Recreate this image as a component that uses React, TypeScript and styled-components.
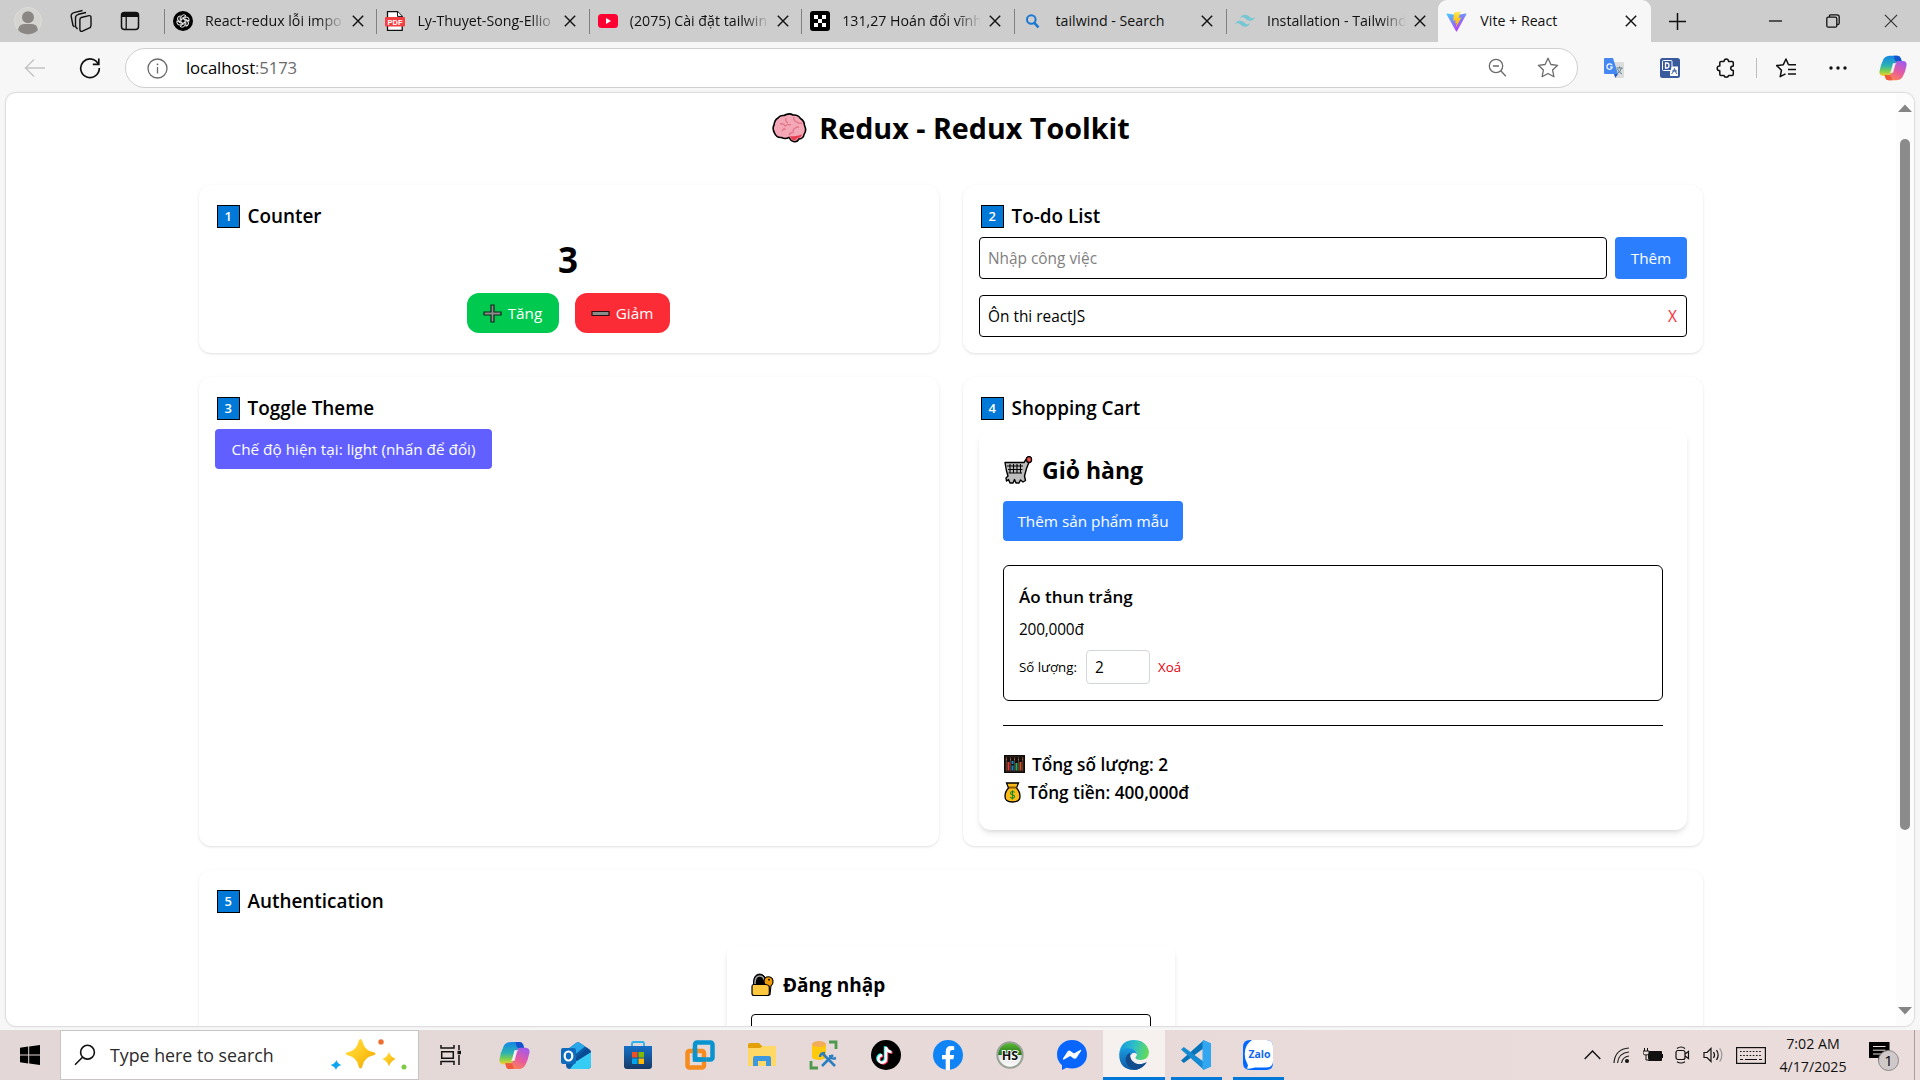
import React from "react";
import styled, { createGlobalStyle } from "styled-components";

const GlobalStyle = createGlobalStyle`
  *, *::before, *::after { box-sizing: border-box; }
  html, body { margin: 0; padding: 0; overflow: hidden; }
  body { font-family: "Segoe UI", "Open Sans", "Noto Sans", sans-serif; color: #000; }
  svg { display: block; flex: none; }
  h1, h2, h3, p { margin: 0; }
  button, input { font: inherit; border: 0; }
`;

/* ---------- shell ---------- */

const Screen = styled.div`
  width: 1920px;
  height: 1080px;
  display: flex;
  flex-direction: column;
  overflow: hidden;
  background: #f7f7f7;
`;

const TabStrip = styled.header`
  height: 42px;
  flex: none;
  display: flex;
  background: #cdcdcd;
`;

const StripTools = styled.div`
  width: 164px;
  flex: none;
  display: flex;
  align-items: center;
  justify-content: space-between;
  padding: 0 24px 0 14px;
`;

const Tab = styled.div<{ $active?: boolean }>`
  width: 212.4px;
  flex: none;
  display: flex;
  align-items: center;
  position: relative;
  padding: 0 12px 0 ${(p) => (p.$active ? 8 : 9)}px;
  background: ${(p) => (p.$active ? "#f7f7f7" : "transparent")};
  border-radius: ${(p) => (p.$active ? "9px 9px 0 0" : "0")};

  &::before {
    content: "";
    position: absolute;
    left: 0;
    top: 9px;
    width: 1px;
    height: 25px;
    background: ${(p) => (p.$active ? "transparent" : "#808080")};
  }
`;

const TabLabel = styled.span<{ $fade?: boolean }>`
  width: 138px;
  flex: none;
  margin-left: ${(p) => (p.$fade ? 12 : 13)}px;
  margin-right: ${(p) => (p.$fade ? 9 : 7)}px;
  overflow: hidden;
  white-space: nowrap;
  font-size: 14.2px;
  line-height: 22px;
  color: #111;
  mask-image: ${(p) => (p.$fade ? "linear-gradient(90deg, #000 82%, transparent 101%)" : "none")};
`;

const WindowControls = styled.div`
  flex: 1;
  display: flex;
  align-items: center;
  justify-content: space-between;
  padding: 0 22px 0 18px;
`;

const Captions = styled.div`
  display: flex;
  gap: 44px;
`;

const Toolbar = styled.div`
  height: 50px;
  flex: none;
  display: flex;
  align-items: flex-start;
  padding-top: 6px;
`;

const NavButtons = styled.div`
  width: 125px;
  height: 40px;
  display: flex;
  align-items: center;
  gap: 33px;
  padding-left: 24px;
`;

const AddressBar = styled.div`
  width: 1453px;
  height: 40px;
  display: flex;
  align-items: center;
  padding: 0 18px 0 21px;
  border: 1px solid #cfcfcf;
  border-radius: 20px;
  background: #fff;
`;

const Url = styled.span`
  flex: 1;
  margin: -2px 0 0 18px;
  font-size: 16.7px;
  letter-spacing: -0.1px;
  span { color: #6b6b6b; }
`;

const AddressActions = styled.div`
  display: flex;
  align-items: center;
  gap: 29px;
`;

const Extensions = styled.div`
  flex: 1;
  height: 40px;
  display: flex;
  align-items: center;
  padding: 0 13px 0 26px;
`;

const ExtensionTools = styled.div`
  display: flex;
  gap: 36px;
`;

const Divider = styled.span`
  width: 1px;
  height: 20px;
  margin: 0 18px 0 20px;
  background: #bdbdbd;
`;

const EdgeTools = styled.div`
  flex: 1;
  display: flex;
  align-items: center;
  justify-content: space-between;
`;

/* ---------- page ---------- */

const Viewport = styled.div`
  height: 935px;
  flex: none;
  margin: 0 5px 3px;
  display: flex;
  overflow: hidden;
  border: 1px solid #dedede;
  border-radius: 11px;
  background: #fff;
  box-shadow: 0 0 2px rgba(0, 0, 0, 0.08);
`;

const Main = styled.main`
  width: 1890px;
  height: 933px;
  overflow: hidden;
  display: flex;
  flex-direction: column;
  align-items: center;
  padding-top: 17px;
`;

const ScrollTrack = styled.div`
  width: 18px;
  display: flex;
  flex-direction: column;
  align-items: center;
  padding-top: 11px;
  background: #fcfcfc;
`;

const ScrollThumb = styled.div`
  width: 10px;
  height: 691px;
  margin: 27px 0 177px;
  border-radius: 5px;
  background: #8b8b8b;
`;

const PageTitle = styled.h1`
  height: 36px;
  display: flex;
  align-items: center;
  gap: 12px;
  font-size: 28.7px;
  line-height: 36px;
  font-weight: 700;
  white-space: nowrap;
`;

const Grid = styled.div`
  width: 1504px;
  margin-top: 39px;
  display: grid;
  grid-template-columns: 1fr 1fr;
  grid-template-rows: 168px 469px 260px;
  gap: 24px;
`;

const Card = styled.section<{ $wide?: boolean }>`
  grid-column: ${(p) => (p.$wide ? "1 / -1" : "auto")};
  padding: 16px;
  border-radius: 12px;
  background: #fff;
  box-shadow: 0 1px 3px rgba(0, 0, 0, 0.1), 0 1px 2px -1px rgba(0, 0, 0, 0.1);
`;

const CardTitle = styled.h2`
  height: 28px;
  margin-bottom: 8px;
  display: flex;
  align-items: center;
  gap: 8px;
  padding: 2px 0 0 2px;
  font-size: 18.9px;
  line-height: 26px;
  font-weight: 600;
`;

const Keycap = styled.span`
  width: 22.5px;
  height: 23px;
  display: flex;
  align-items: center;
  justify-content: center;
  border: 1.5px solid #000;
  background: #0078d7;
  color: #fff;
  font-size: 13px;
  line-height: 20px;
  font-weight: 600;
`;

const Count = styled.p`
  padding-top: 3px;
  text-align: center;
  font-size: 35px;
  line-height: 40px;
  height: 40px;
  font-weight: 700;
  margin: 0 2px 16px 0;
`;

const ButtonRow = styled.div`
  display: flex;
  justify-content: center;
  gap: 16px;
  margin-right: 2px;
`;

const Button = styled.button<{ $tone: string; $width: number; $height?: number; $round?: boolean }>`
  width: ${(p) => p.$width}px;
  height: ${(p) => p.$height ?? 40}px;
  flex: none;
  display: flex;
  align-items: center;
  justify-content: center;
  gap: 6px;
  padding: 0;
  border-radius: ${(p) => (p.$round ? 12 : 4)}px;
  background: ${(p) => p.$tone};
  color: #fff;
  font-size: 15.3px;
  white-space: nowrap;
`;

const TodoForm = styled.div`
  display: flex;
  gap: 8px;
  margin-bottom: 16px;
`;

const TextInput = styled.input`
  flex: 1;
  height: 42px;
  padding: 0 8px;
  border: 1px solid #000;
  border-radius: 4px;
  background: #fff;
  font-size: 15.4px;
  &::placeholder { color: #808080; opacity: 1; }
`;

const TodoItem = styled.div`
  height: 42px;
  display: flex;
  align-items: center;
  justify-content: space-between;
  padding: 0 9px 0 8px;
  border: 1px solid #000;
  border-radius: 4px;
  font-size: 15.4px;
  span { color: #fb2c36; }
`;

const CartPanel = styled.div`
  padding: 24px;
  border-radius: 12px;
  background: #fff;
  box-shadow: 0 4px 6px -1px rgba(0, 0, 0, 0.1), 0 2px 4px -2px rgba(0, 0, 0, 0.1);
`;

const PanelTitle = styled.h2<{ $size: number; $line: number; $gap: number }>`
  height: ${(p) => p.$line}px;
  margin-bottom: 16px;
  padding-top: 2px;
  display: flex;
  align-items: center;
  gap: ${(p) => p.$gap}px;
  font-size: ${(p) => p.$size}px;
  line-height: ${(p) => p.$line - 2}px;
  font-weight: 700;
`;

const CartItem = styled.div`
  height: 136px;
  margin: 24px 0;
  padding: 16px 15px;
  border: 1px solid #000;
  border-radius: 6px;
`;

const ItemName = styled.h3`
  height: 28px;
  padding-top: 1px;
  font-size: 17px;
  line-height: 28px;
  font-weight: 600;
`;

const ItemPrice = styled.p`
  margin: 8px 0;
  font-size: 15.4px;
  line-height: 24px;
  letter-spacing: -0.2px;
`;

const QuantityRow = styled.div`
  display: flex;
  align-items: center;
  gap: 8px;
  font-size: 13.3px;
`;

const QuantityLabel = styled.span`
  width: 59px;
  white-space: nowrap;
`;

const QuantityInput = styled.input`
  width: 64px;
  height: 34px;
  padding: 0 8px;
  border: 1px solid #d1d5dc;
  border-radius: 4px;
  font-size: 15.4px;
`;

const RemoveLink = styled.span`
  color: #e7000b;
`;

const Totals = styled.div`
  padding-top: 24px;
  border-top: 1px solid #000;
`;

const TotalLine = styled.p`
  height: 28px;
  display: flex;
  align-items: center;
  gap: 7px;
  padding-left: 1px;
  font-size: 17.2px;
  font-weight: 600;
`;

const LoginPanel = styled(CartPanel)`
  width: 448px;
  height: 300px;
  margin: 32px auto 0;
  border-radius: 8px;
`;

const LoginInput = styled(TextInput)`
  width: 400px;
`;

/* ---------- taskbar ---------- */

const Taskbar = styled.footer`
  height: 50px;
  flex: none;
  display: flex;
  background: linear-gradient(90deg, #e3d7d7, #e6d9d8 45%, #ebdddc);
`;

const StartSlot = styled.div`
  width: 60px;
  display: flex;
  align-items: center;
  justify-content: center;
`;

const SearchBox = styled.div`
  width: 359px;
  height: 50px;
  display: flex;
  align-items: center;
  padding: 0 11px 0 13px;
  border: 1px solid #c9c4c4;
  background: #fff;
`;

const SearchText = styled.span`
  flex: 1;
  margin-left: 14px;
  font-size: 17.8px;
  color: #2b2b2b;
`;

const TaskViewSlot = styled(StartSlot)`
  width: 63px;
`;

const AppSlot = styled.div<{ $open?: boolean; $current?: boolean }>`
  width: 62px;
  display: flex;
  align-items: center;
  justify-content: center;
  position: relative;
  background: ${(p) => (p.$current ? "#f6f0ef" : "transparent")};

  &::after {
    content: "";
    position: absolute;
    bottom: 0;
    left: ${(p) => (p.$current ? 0 : 6)}px;
    right: ${(p) => (p.$current ? 0 : 5)}px;
    height: 3px;
    background: ${(p) => (p.$open || p.$current ? "#0078d7" : "transparent")};
  }
`;

const AppRow = styled.div`
  display: flex;
  padding-left: 1px;
`;

const Tray = styled.div`
  margin-left: auto;
  display: flex;
  align-items: center;
`;

const TrayIcons = styled.div`
  display: flex;
  align-items: center;
  gap: 12px;
  margin-right: 12px;
`;

const Clock = styled.div`
  width: 70px;
  font-size: 14.2px;
  line-height: 23px;
  color: #111;
  white-space: nowrap;
  display: flex;
  flex-direction: column;
  align-items: center;
  padding-bottom: 1px;
`;

const Notice = styled.div`
  position: relative;
  width: 30px;
  height: 32px;
  margin: 5px 15px 0 21px;
`;

const NoticeBadge = styled.span`
  position: absolute;
  left: 9px;
  top: 8px;
  width: 21px;
  height: 21px;
  border-radius: 50%;
  border: 1px solid #8b8786;
  background: #cfcac9;
  font-size: 15px;
  line-height: 19px;
  text-align: center;
`;

const ShowDesktop = styled.span`
  width: 6px;
  height: 50px;
  border-left: 1px solid #a99f9e;
`;

/* ---------- drawings ---------- */

const CloseX = ({ size = 12, color = "#111", w = 1.4 }: { size?: number; color?: string; w?: number }) => (
  <svg width={size} height={size} viewBox="0 0 12 12" stroke={color} strokeWidth={w}>
    <path d="M.8 .8 11.2 11.2M11.2 .8.8 11.2" />
  </svg>
);

const Avatar = () => (
  <svg width="28" height="28" viewBox="0 0 28 28">
    <circle cx="14" cy="14" r="13.5" fill="#d6d4d1" stroke="#dedcd9" />
    <circle cx="14" cy="10.3" r="6" fill="#8b8784" />
    <path d="M4 23q1-6 6-6h8q5 0 6 6a13.5 13.5 0 0 1-20 0z" fill="#8b8784" />
  </svg>
);

const Workspaces = () => (
  <svg width="24" height="24" viewBox="0 0 24 24" fill="#cdcdcd" stroke="#111" strokeWidth="1.4" strokeLinejoin="round">
    <path d="M13.500 1.500 5 3.600Q1.800 4.500 2.200 7.500L4 16.500l1.500 1.500" fill="none" />
    <path d="M17 3.500 9.500 5.300Q6.300 6.200 6.500 9v8.500l2 2.500" fill="none" />
    <path d="m12.300 8.500 7.700-1.900q2-.2 2 1.800v8.200q0 2-2 2.600l-6.500 3q-2.400.6-2.600-1.600V10.800q0-1.900 1.400-2.300z" />
  </svg>
);

const VerticalTabs = () => (
  <svg width="20" height="20" viewBox="0 0 20 20">
    <rect x="1.500" y="1.500" width="17" height="17" rx="3" fill="none" stroke="#111" strokeWidth="1.500" />
    <path d="M1 4.500Q1 1 4.500 1h11Q19 1 19 4.500V6H1z" fill="#111" />
    <path d="M6.200 6v12" stroke="#111" strokeWidth="1.300" />
  </svg>
);

const ChatGpt = () => (
  <svg width="20" height="20" viewBox="0 0 20 20">
    <circle cx="10" cy="10" r="10" fill="#000" />
    <g fill="none" stroke="#fff" strokeWidth=".9">
      {[0, 60, 120, 180, 240, 300].map((a) => (
        <path key={a} transform={`rotate(${a} 10 10)`} d="M8 11.200V6.200q.3-2.400 2.700-2.400 1.500 0 2.300 1.100L8.800 7.400" />
      ))}
    </g>
  </svg>
);

const PdfIcon = () => (
  <svg width="20" height="20" viewBox="0 0 20 20">
    <path d="M2.500 .7h10l4.700 4.700v13.900h-14.700z" fill="#fff" stroke="#111" strokeWidth="1.300" />
    <path d="M12.500 .7v4.700h4.700" fill="#fff" stroke="#111" />
    <rect y="6" width="20" height="9.500" rx="1" fill="#f43e42" />
    <text x="10" y="13.500" fontSize="7.500" fontWeight="700" fill="#fff" textAnchor="middle" fontFamily="Liberation Sans, sans-serif">PDF</text>
  </svg>
);

const YouTube = () => (
  <svg width="20" height="20" viewBox="0 0 20 20">
    <rect y="3" width="20" height="14" rx="3.500" fill="#ff0033" />
    <path d="M8 7v6l5-3z" fill="#fff" />
  </svg>
);

const Okx = () => (
  <svg width="20" height="20" viewBox="0 0 20 20">
    <rect width="20" height="20" rx="3" fill="#000" />
    <path d="M4 4h4v4H4zM12 4h4v4h-4zM8 8h4v4H8zM4 12h4v4H4zM12 12h4v4h-4z" fill="#fff" />
  </svg>
);

const BingSearch = () => (
  <svg width="20" height="20" viewBox="0 0 20 20" fill="none" stroke="#1a77d4" strokeWidth="2">
    <circle cx="8.300" cy="8.500" r="4.300" />
    <path d="m11.300 11.800 4.200 4.600" strokeWidth="2.500" />
  </svg>
);

const Tailwind = () => (
  <svg width="20" height="20" viewBox="0 0 54 54" fill="#75c7d3">
    <path d="M27 10q-10.800 0-13.500 10.800 4-5.400 9.500-4c2.100.5 3.500 2 5.200 3.700C30.900 23.200 34 26.200 40.500 26.200q10.800 0 13.500-10.800-4 5.400-9.500 4c-2.100-.5-3.500-2-5.200-3.700C36.600 13 33.500 10 27 10zM13.500 26.200Q2.700 26.200 0 37q4-5.400 9.500-4c2.100.5 3.500 2 5.200 3.700 2.700 2.700 5.800 5.700 12.300 5.700q10.800 0 13.500-10.800-4 5.400-9.500 4c-2.100-.5-3.500-2-5.200-3.700-2.700-2.700-5.800-5.700-12.300-5.700z" />
  </svg>
);

const Vite = () => (
  <svg width="21" height="21" viewBox="0 0 21 21">
    <defs>
      <linearGradient id="viteA" x1="0" y1="0" x2=".6" y2="1">
        <stop stopColor="#41d1ff" /><stop offset="1" stopColor="#bd34fe" />
      </linearGradient>
      <linearGradient id="viteB" x1="0" y1="0" x2="0" y2="1">
        <stop stopColor="#ffea83" /><stop offset=".2" stopColor="#ffdd35" /><stop offset="1" stopColor="#ffa800" />
      </linearGradient>
    </defs>
    <path d="M20.400 3.200 11 20.200q-.5.700-1 0L.5 3.200q-.3-.8.600-.8l9.400 1.700 9.300-1.700q.9 0 .6.800z" fill="url(#viteA)" />
    <path d="m14.700.3-6.700 1.300-.8 7.800q0 .5.500.4l2-.5-.6 2.900 1.500-.2-.8 4.700 5.200-9.600q.2-.6-.4-.5l-2 .4z" fill="url(#viteB)" />
  </svg>
);

const Copilot = ({ size, id }: { size: number; id: string }) => (
  <svg width={size} height={size} viewBox="0 0 32 32">
    <defs>
      <linearGradient id={`${id}a`} x1="0" y1="0" x2="0" y2="1">
        <stop stopColor="#1386e8" /><stop offset=".5" stopColor="#2db3b0" /><stop offset=".75" stopColor="#7bcf51" /><stop offset="1" stopColor="#f8cf2c" />
      </linearGradient>
      <linearGradient id={`${id}b`} x1=".7" y1="0" x2=".2" y2="1">
        <stop stopColor="#a45bea" /><stop offset=".5" stopColor="#e75b9e" /><stop offset="1" stopColor="#ff8a4a" />
      </linearGradient>
    </defs>
    <path d="M13 2h8q3 0 4 3l1.200 4H22q-3 0-4 3l-3 10q-1 3-4 3H5q-5 0-4.500-5Q1.500 13 5 6q2-4 8-4z" fill={`url(#${id}a)`} />
    <path d="M17 2h4q3 0 4 3l1.200 4H22q-3 0-4-2.500z" fill="#1554cf" />
    <path d="M19 30h-8q-3 0-3.800-3L6.500 24H11q3 0 4-3l3-10q1-3 4-3h5q5 0 4.500 5Q30 21 27 26q-2 4-8 4z" fill={`url(#${id}b)`} />
    <path d="M15 30h-4q-3 0-3.800-3l-.7-3H11q3 0 3.500 3z" fill="#ef5a3c" />
    <path d="M16 10.500h4.200q-1.300.5-1.900 2.500l-2.200 8.500H12q1.200-.7 1.700-2.500z" fill="#f5efef" />
  </svg>
);

const BackArrow = () => (
  <svg width="22" height="22" viewBox="0 0 22 22" fill="none" stroke="#c4c4c4" strokeWidth="1.500">
    <path d="M21 11H2M10 2.500 1.500 11l8.500 8.500" />
  </svg>
);

const Reload = () => (
  <svg width="22" height="22" viewBox="0 0 22 22" fill="none" stroke="#111" strokeWidth="1.700">
    <path d="M19.500 7.500A9.300 9.300 0 1 0 20.300 11" />
    <path d="M19.800 1.500V7.300h-6" />
  </svg>
);

const InfoIcon = () => (
  <svg width="21" height="21" viewBox="0 0 21 21" fill="none" stroke="#6a6a6a" strokeWidth="1.300">
    <circle cx="10.500" cy="10.500" r="9.500" />
    <path d="M10.500 9v6.500" /><path d="M10.500 5.600v1.600" strokeWidth="1.600" />
  </svg>
);

const ZoomOut = () => (
  <svg width="20" height="20" viewBox="0 0 20 20" fill="none" stroke="#6a6a6a" strokeWidth="1.300">
    <circle cx="8" cy="8" r="6.700" /><path d="M5 8h6M12.800 12.800l5 5.500" />
  </svg>
);

const starPath = "m11 1.300 2.900 6.200 6.700.8-5 4.700 1.300 6.800L11 16.500l-5.900 3.300L6.400 13l-5-4.700 6.700-.8z";

const Star = () => (
  <svg width="22" height="22" viewBox="0 0 22 22" fill="none" stroke="#6a6a6a" strokeWidth="1.300" strokeLinejoin="round">
    <path d={starPath} />
  </svg>
);

const Translate = () => (
  <svg width="20" height="20" viewBox="0 0 20 20">
    <path d="M8 4h11q1 0 1 1v14q0 1-1 1h-7z" fill="#dcdcdc" />
    <path d="M12.500 10h6M15.500 8.500V10M17.500 10q-1 4-4.500 6M13.500 11q1.500 3.500 4.500 5" stroke="#5e7c89" fill="none" />
    <path d="M1 0h8l5 16H1q-1 0-1-1V1q0-1 1-1z" fill="#4688f1" />
    <path d="M10 16h4l-2.800 4z" fill="#2a56c6" />
    <path d="M8 7.300A2.700 2.700 0 1 0 8.300 9H6" stroke="#fff" strokeWidth="1.200" fill="none" />
  </svg>
);

const DictIcon = () => (
  <svg width="20" height="20" viewBox="0 0 20 20">
    <rect width="20" height="20" rx="2.500" fill="#3a5a9e" />
    <rect x="2.500" y="2.500" width="9.500" height="10" rx="1" fill="none" stroke="#fff" />
    <path d="M5.500 5v5h1.200q2.300 0 2.300-2.500T6.700 5z" fill="none" stroke="#fff" strokeWidth="1.300" />
    <path d="M12 8.500h6V18h-8v-4z" fill="#fff" />
    <path d="M11.500 16q2.500-2 3-5.500 .5 3.500 2.500 5.500M12 13h5" stroke="#3a5a9e" fill="none" />
  </svg>
);

const Puzzle = () => (
  <svg width="20" height="20" viewBox="0 0 20 20" fill="none" stroke="#111" strokeWidth="1.500" strokeLinejoin="round">
    <path d="M5 3.500h3Q8.300 1 10.300 1t2.300 2.500H16q1.300 0 1.300 1.200V8q-2.600.2-2.600 2.200t2.600 2.300v3.800q0 1.200-1.200 1.200h-3.500q-.3 1.700-2.300 1.700T8 17.500H5q-1.200 0-1.200-1.200v-3.500Q1.200 12.600 1.200 10.200T3.800 8V4.500q0-1 1.200-1z" />
  </svg>
);

const Favorites = () => (
  <svg width="22" height="22" viewBox="0 0 22 22" fill="none" stroke="#111" strokeWidth="1.500" strokeLinejoin="round">
    <path d="M13.500 7.800 11 2 8.200 7.800l-6.500.8 4.800 4.600-1.300 6.500 5.300-2.900" /><path d="M13.300 7.800H21M13 12.500h8M13 17h8" />
  </svg>
);

const Dots = () => (
  <svg width="18" height="6" viewBox="0 0 18 6" fill="#111">
    <circle cx="2" cy="3" r="1.700" /><circle cx="9" cy="3" r="1.700" /><circle cx="16" cy="3" r="1.700" />
  </svg>
);

const Arrow = ({ down }: { down?: boolean }) => (
  <svg width="14" height="8" viewBox="0 0 14 8" fill="#858585"><path d={down ? "M0 0h14L7 7.500z" : "M0 8h14L7 .5z"} /></svg>
);

const Brain = () => (
  <svg width="35" height="30" viewBox="0 0 35 30">
    <path d="M12 2.500Q17-.5 21 2q5-.5 7.500 3.500 4 2.500 4 7 2.500 5-.5 9-.5 4-5 4.500-2 3.500-5.500 2.500-3-.8-4.500-4-4 2-7.500 0-5 .5-7-4.500Q0 15.500 2 12 2.500 7 6 5q2-3 6-2.500z" fill="#f4a7b6" stroke="#000" strokeWidth="1.600" />
    <path d="M18 23q6 1 12-1.500-1 3.500-4.500 3.500-2 3.200-4.500 2.300-2-.8-3-4.300z" fill="#e63f52" />
    <path d="M8 11q4-1 5 2 3-2 6-1M14 5q-1 4 2 5M22 4q-1 4 3 5 2 2 5 1M21 18q1-4 6-4M10 18q3-4 3-1M17 22q2-3 5-3" fill="none" stroke="#e2798d" strokeWidth="1.400" />
  </svg>
);

const PlusMark = () => (
  <svg width="19" height="19" viewBox="0 0 19 19"><path d="M8 1h3v7h7v3h-7v7H8v-7H1V8h7z" fill="#8c8c8c" stroke="#10251a" strokeWidth="1.200" /></svg>
);

const MinusMark = () => (
  <svg width="19" height="19" viewBox="0 0 19 19"><path d="M1 7.500h17v4H1z" fill="#8c8c8c" stroke="#2a1010" strokeWidth="1.200" /></svg>
);

const CartIcon = () => (
  <svg width="30" height="28" viewBox="0 0 30 28" fill="none" stroke="#000" strokeLinejoin="round">
    <path d="M2 6.500h19l3-4.500 3 1.500-1.500 4-2 5L21.500 20l1 4.500-2.500 1.500-2.500-2-1.500 3h-3l-1.500-3.500L10 27H7l-1.500-3.500L3.500 25 3 22l2-2L3.500 15z" fill="#bdbdbd" strokeWidth="1.400" />
    <path d="M4 10h16M5 13.500h14.500M5.500 17h13.500" strokeWidth="1.100" />
    <path d="M7 8v9M10.500 8v9M14 8v9M17.500 8v9" strokeWidth="1.100" />
    <ellipse cx="26" cy="3.500" rx="2.600" ry="3" fill="#e9524f" strokeWidth="1.300" />
  </svg>
);

const Abacus = () => (
  <svg width="21" height="18" viewBox="0 0 21 18">
    <rect x=".8" y=".8" width="19.400" height="16.400" fill="#5b3a2e" stroke="#000" strokeWidth="1.500" />
    <path d="M2 4.500h17" stroke="#b0643a" strokeWidth="1.300" />
    <path d="M4.500 2v14M8.500 2v14M12.500 2v14M16.500 2v14" stroke="#111" strokeWidth="3" />
    <g strokeWidth="2">
      <path d="M4.500 7v8.500" stroke="#e53935" /><path d="M8.500 6v3M8.500 10.500v5" stroke="#1584c7" /><path d="M12.500 8v7.500" stroke="#27ae60" /><path d="M16.500 7v8.500" stroke="#c8552a" />
    </g>
  </svg>
);

const MoneyBag = () => (
  <svg width="17" height="21" viewBox="0 0 17 21">
    <path d="M2.500 1h12l-2 5Q16 9.500 16 14.500q0 5.500-7.500 5.500T1 14.500Q1 9.500 4.500 6z" fill="#fdbb17" stroke="#000" strokeWidth="1.300" />
    <path d="M5 5.500h7.500" stroke="#8a5a00" strokeWidth="2" />
    <path d="M10.500 10.500Q10 9.500 8.500 9.500q-2 0-2 1.600 0 1.400 2 1.700 2.100.3 2.100 1.800T8.500 16.200q-1.700 0-2.200-1.200M8.500 8.300v9.200" stroke="#168a2a" strokeWidth="1.100" fill="none" />
  </svg>
);

const LockKey = () => (
  <svg width="23" height="24" viewBox="0 0 23 24">
    <path d="M2.500 12.500V9Q3 1 8.700 1T15 9v3.500z" fill="#000" stroke="#000" />
    <path d="M4 12V9q.5-6 4.700-6 3.500 0 4.500 4" fill="none" stroke="#a5a5a5" strokeWidth="1.500" />
    <path d="M14 5q2-1.800 5-1 3.300 1.300 3 5 0 2.500-2 3.800l-1 8.700-3 1V12.500q-3-1-3-4 0-2 1-3.500z" fill="#f09b00" stroke="#000" strokeWidth="1.100" />
    <circle cx="18" cy="6.700" r=".9" fill="#000" />
    <path d="M2.500 11.500h12.300q3 .5 3.500 2v7q0 2-2 2H3q-2 0-2-2v-7q0-2 1.500-2z" fill="#ffc83d" stroke="#000" strokeWidth="1.200" />
  </svg>
);

const WindowsLogo = () => (
  <svg width="20" height="20" viewBox="0 0 20 20"><path d="M0 2.700 8.200 1.600v7.800H0zM9.200 1.500 20 0v9.400H9.200zM0 10.400h8.200v8L0 17.300zM9.200 10.400H20V20L9.200 18.500z" /></svg>
);

const SearchGlass = () => (
  <svg width="22" height="22" viewBox="0 0 22 22" fill="none" stroke="#111" strokeWidth="1.600"><circle cx="13.500" cy="8.200" r="6.900" /><path d="M8.500 13.300 1 20.800" /></svg>
);

const Sparkles = () => (
  <svg width="77" height="32" viewBox="0 0 77 32">
    <defs>
      <linearGradient id="gold" x1="0" y1="0" x2="1" y2="1"><stop stopColor="#ffe14a" /><stop offset=".5" stopColor="#ffc91f" /><stop offset="1" stopColor="#eaa300" /></linearGradient>
    </defs>
    <path d="M30.500 0q1.500 0 2.500 4 1.800 6.500 8 8.500 4.500 1 4.500 2.300T41 17q-6.200 2-8 8.500-1 4-2.500 4T28 25.500Q26.200 19 20 17q-4.300-1-4.300-2.200T20 12.500q6.200-2 8-8.500 1-4 2.500-4z" fill="url(#gold)" />
    <path d="M59 13q1.500 5 6.700 7Q60.500 22 59 27.500 57.500 22 52.300 20 57.500 18 59 13z" fill="url(#gold)" />
    <path d="M6.500 21q.7 3.500 5 5-4.500 1-5.500 5-1-3.500-5.500-5 4.500-1 6-5z" fill="#0da5ee" />
    <circle cx="51" cy="2.900" r="2.700" fill="#ef6c2f" /><circle cx="74" cy="28" r="2.500" fill="#7fc944" />
  </svg>
);

const TaskView = () => (
  <svg width="22" height="20" viewBox="0 0 22 20" fill="none" stroke="#111" strokeWidth="1.500">
    <path d="M1 0v3h13V0M1 20v-3.500h13V20M1.700 6.700h11.600v6.600H1.700zM19 0v5M19 10v10" /><path d="M17.500 7.500h3.500" strokeWidth="3.500" />
  </svg>
);

const Outlook = () => (
  <svg width="30" height="30" viewBox="0 0 30 30">
    <path d="M5 12Q5 10 7 9l8-6q2-1.500 4 0l9 6q2 1 2 3v13q0 4-4 4H9q-4 0-4-4z" fill="#0c59a4" />
    <path d="m7 9 8-6q2-1.500 4 0l5 3.500L12 16z" fill="#28a8ea" /><path d="m30 12-14 8-7 9h17q4 0 4-4z" fill="#35cdf5" />
    <path d="m13 20 13-12 4 4-14 9z" fill="#0a4c94" />
    <rect y="8" width="15" height="16" rx="2" fill="#0f6cbd" />
    <ellipse cx="7.500" cy="16" rx="3.800" ry="4.500" fill="none" stroke="#fff" strokeWidth="2.200" />
  </svg>
);

const Store = () => (
  <svg width="30" height="30" viewBox="0 0 30 30">
    <defs><linearGradient id="store" x1="0" y1="0" x2="0" y2="1"><stop stopColor="#1670c8" /><stop offset="1" stopColor="#173a66" /></linearGradient></defs>
    <path d="M9 7V3.500q0-1.500 1.500-1.500h9Q21 2 21 3.500V7" fill="none" stroke="#29b3ef" strokeWidth="1.800" />
    <path d="M1 6h28v20q0 3-3 3H4q-3 0-3-3z" fill="url(#store)" />
    <path d="M9 12h5.500v5.500H9z" fill="#f25022" /><path d="M15.500 12H21v5.500h-5.500z" fill="#7fba00" />
    <path d="M9 18.500h5.500V24H9z" fill="#00a4ef" /><path d="M15.500 18.500H21V24h-5.500z" fill="#ffb900" />
  </svg>
);

const VMware = () => (
  <svg width="30" height="30" viewBox="0 0 30 30" fill="none" strokeWidth="4.500">
    <rect x="10" y="2.500" width="17.500" height="17" rx="2" stroke="#0a94cf" />
    <rect x="2.500" y="11" width="16.500" height="16.500" rx="2" stroke="#f68b1f" />
    <path d="M10 8v11.500h11" stroke="#0a94cf" />
  </svg>
);

const Folder = () => (
  <svg width="28" height="30" viewBox="0 0 28 30">
    <path d="M0 5q0-2 2-2h9l3 3v4H0z" fill="#e3a008" /><path d="M0 8h12l3-2h13v20H0z" fill="#ffd865" />
    <path d="M5 26v-8q0-2 2-2h14q2 0 2 2v8h-5v-5h-8v5z" fill="#3f98df" />
  </svg>
);

const DbTool = () => (
  <svg width="30" height="30" viewBox="0 0 30 30">
    <path d="M3 4v14q6.500 4 14 0V4z" fill="#ffc90e" /><ellipse cx="10" cy="4" rx="7" ry="3" fill="#f3ad59" />
    <path d="M20 2h7v7M2 21v7h7" fill="none" stroke="#4d9a4d" strokeWidth="2.800" />
    <path d="m13 26 11-11M14 14l12 12" stroke="#2d7dc1" strokeWidth="2.600" />
    <path d="M11 17q0-4 5-4M21 15q0 5 6 3" stroke="#2d7dc1" strokeWidth="2.400" fill="none" />
  </svg>
);

const TikTok = () => {
  const note = "M15 7v12a3.800 3.800 0 1 1-3.800-3.800M15 7q.7 4.500 5.500 5";
  return (
    <svg width="30" height="30" viewBox="0 0 30 30" fill="none" strokeWidth="2.500">
      <circle cx="15" cy="15" r="15" fill="#000" />
      <path d={note} stroke="#25f4ee" transform="translate(-1 -.7)" /><path d={note} stroke="#fe2c55" transform="translate(1 .7)" /><path d={note} stroke="#fff" />
    </svg>
  );
};

const Facebook = () => (
  <svg width="30" height="30" viewBox="0 0 30 30">
    <circle cx="15" cy="15" r="15" fill="#1084f5" />
    <path d="M12.700 30V19.300H9v-4.400h3.700v-3.200q0-5.700 5.300-5.700 1.600 0 3.200.3v3.800h-1.900q-2.300 0-2.300 2.300v2.500h4.100l-.7 4.400H17V30q-2.200.3-4.300 0z" fill="#fff" />
  </svg>
);

const HeidiSql = () => (
  <svg width="28" height="28" viewBox="0 0 28 28">
    <defs><linearGradient id="hs" x1="0" y1="0" x2="0" y2="1"><stop stopColor="#5cbf35" /><stop offset=".49" stopColor="#257519" /><stop offset=".5" stopColor="#ddd" /><stop offset="1" stopColor="#fff" /></linearGradient></defs>
    <circle cx="14" cy="14" r="12.700" fill="url(#hs)" stroke="#98a297" strokeWidth="2" />
    <text x="14" y="18.500" textAnchor="middle" fontSize="12.500" fontWeight="700" fill="#111" stroke="#fff" strokeWidth="1.800" paintOrder="stroke" fontFamily="Open Sans, sans-serif">HS</text>
  </svg>
);

const Messenger = () => (
  <svg width="30" height="30" viewBox="0 0 30 30">
    <path d="M15 0C6.500 0 0 6.200 0 14.500q0 6.500 5 10.800V30l4.500-2.200q2.700.8 5.500.8c8.500 0 15-5.900 15-14.100S23.500 0 15 0z" fill="#0866ff" />
    <path d="m6 18.500 4.700-7.200q1.100-1.300 2.700-.4l3.500 2.700 6.300-3.700q1.500-.3.800 1.200l-4.600 7q-1.100 1.300-2.700.4L13.200 16l-6.200 3.600q-1.500.3-1-1.100z" fill="#fff" />
  </svg>
);

const Edge = () => (
  <svg width="30" height="30" viewBox="0 0 30 30">
    <defs>
      <linearGradient id="edgeTop" x1="0" y1=".3" x2="1" y2=".5"><stop stopColor="#1499df" /><stop offset=".5" stopColor="#31bfc5" /><stop offset="1" stopColor="#62dc57" /></linearGradient>
      <linearGradient id="edgeLow" x1="0" y1="0" x2="0" y2="1"><stop stopColor="#1a9be0" /><stop offset="1" stopColor="#0c59a4" /></linearGradient>
    </defs>
    <path d="M.2 14Q1.500 0 15 0q12 0 15 11.500 0 8-8 8.500-6 0-5.500-2.700 2.500-2.300.5-5.300Q9 4 .2 14z" fill="url(#edgeTop)" />
    <path d="M.2 14Q4 6.500 12 8.500q5 1.500 6 6-2-3-5-1-4 3-1 8.500 5 5 15 .5Q22 30 15 30 0 29.500.2 14z" fill="url(#edgeLow)" />
    <path d="M11 12.500Q4 17 8 24q3.500 5.500 9 5.700Q24 28.500 28 22q-6 4-12 1-5.500-3-5-10.500z" fill="#124c8c" />
  </svg>
);

const VsCode = () => (
  <svg width="30" height="30" viewBox="0 0 30 30">
    <path d="m0 20.500 2.800 2.500L23 8V0z" fill="#0873b9" /><path d="M0 9.500 2.800 7 23 22v8z" fill="#168bd2" />
    <path d="m22.500 0 7.500 3.200v23.600L22.500 30l-1-1.500V1.500z" fill="#30a7f0" />
  </svg>
);

const Zalo = () => (
  <svg width="30" height="30" viewBox="0 0 30 30">
    <path d="M7 0h16q7 0 7 7v16q0 7-7 7H7q-7 0-7-7V7q0-7 7-7z" fill="#0068ff" />
    <path d="M9 0h14q7 0 7 7v14q0 6.500-7 6.500H12q-4 1.500-8.500 1Q6 26.500 4 23q-3-5-2-12T9 0z" fill="#fff" />
    <text x="16.500" y="18" textAnchor="middle" fontSize="10.500" fontWeight="700" fill="#1269e8" fontFamily="Open Sans, sans-serif">Zalo</text>
  </svg>
);

const Tabs = [
  { icon: <ChatGpt />, label: "React-redux lỗi impo", fade: true },
  { icon: <PdfIcon />, label: "Ly-Thuyet-Song-Ellio", fade: true },
  { icon: <YouTube />, label: "(2075) Cài đặt tailwin", fade: true },
  { icon: <Okx />, label: "131,27 Hoán đổi vĩnh", fade: true },
  { icon: <BingSearch />, label: "tailwind - Search" },
  { icon: <Tailwind />, label: "Installation - Tailwind", fade: true },
  { icon: <Vite />, label: "Vite + React", active: true },
];

const Apps = [
  { icon: <Copilot size={31} id="cpTask" /> },
  { icon: <Outlook /> },
  { icon: <Store /> },
  { icon: <VMware /> },
  { icon: <Folder /> },
  { icon: <DbTool /> },
  { icon: <TikTok /> },
  { icon: <Facebook /> },
  { icon: <HeidiSql /> },
  { icon: <Messenger /> },
  { icon: <Edge />, current: true },
  { icon: <VsCode />, open: true },
  { icon: <Zalo />, open: true },
];

const SectionTitle = ({ n, children }: { n: number; children: React.ReactNode }) => (
  <CardTitle><Keycap>{n}</Keycap>{children}</CardTitle>
);

const BrowserChrome = () => (
  <>
    <TabStrip>
      <StripTools><Avatar /><Workspaces /><VerticalTabs /></StripTools>
      {Tabs.map((t) => (
        <Tab key={t.label} $active={t.active}>
          {t.icon}
          <TabLabel $fade={t.fade}>{t.label}</TabLabel>
          <CloseX />
        </Tab>
      ))}
      <WindowControls>
        <svg width="17" height="17" viewBox="0 0 17 17" stroke="#111" strokeWidth="1.500"><path d="M8.500 0v17M0 8.500h17" /></svg>
        <Captions>
          <svg width="13" height="14" viewBox="0 0 13 14" stroke="#111" strokeWidth="1.300"><path d="M0 7h13" /></svg>
          <svg width="14" height="14" viewBox="0 0 14 14" fill="none" stroke="#111" strokeWidth="1.300"><rect x=".8" y="3.200" width="10" height="10" rx="1.500" /><path d="M3.500 3V2Q3.500.8 5 .8h6q2.200 0 2.200 2.200v6q0 1.500-1.200 1.500h-1" /></svg>
          <CloseX size={14} color="#333" w={1} />
        </Captions>
      </WindowControls>
    </TabStrip>
    <Toolbar>
      <NavButtons><BackArrow /><Reload /></NavButtons>
      <AddressBar>
        <InfoIcon />
        <Url>localhost<span>:5173</span></Url>
        <AddressActions><ZoomOut /><Star /></AddressActions>
      </AddressBar>
      <Extensions>
        <ExtensionTools><Translate /><DictIcon /><Puzzle /></ExtensionTools>
        <Divider />
        <EdgeTools><Favorites /><Dots /><Copilot size={28} id="cpBar" /></EdgeTools>
      </Extensions>
    </Toolbar>
  </>
);

const TrayGlyphs = () => (
  <TrayIcons>
    <svg width="17" height="10" viewBox="0 0 17 10" fill="none" stroke="#111" strokeWidth="1.400"><path d="m.7 9 7.800-8 7.800 8" /></svg>
    <svg width="18" height="18" viewBox="0 0 18 18" fill="none" stroke="#222" strokeWidth="1.200">
      <path d="M1 17Q2 3 16 2M4.500 17Q5.500 7 16 6M8.500 17q1-6 7.500-7" /><circle cx="14" cy="15" r="1.500" fill="#111" />
    </svg>
    <svg width="20" height="14" viewBox="0 0 20 14"><path d="M5.500 3.500h13v9h-13z" fill="#111" stroke="#111" /><path d="M19 6h1v4h-1z" /><path d="M1.500 0v3M4.500 0v3M0 3h6v2.500Q5 7 3 7T0 5.500zM3 7v5h3" fill="#ebdddc" stroke="#111" /></svg>
    <svg width="16" height="18" viewBox="0 0 16 18" fill="none" stroke="#111" strokeWidth="1.200"><rect x="1" y="4.500" width="9" height="9" rx="2" /><path d="m10 8 3.500-2.500v7L10 10M2 2.500Q6-.5 10 2.500M2 15.700q4 2.600 8 0" /></svg>
    <svg width="21" height="16" viewBox="0 0 21 16" fill="none" stroke="#111" strokeWidth="1.200"><path d="M1 5.500h3L8 1.500v13l-4-4H1zM10.500 5q2 3 0 6M13.500 3q3.300 5 0 10" /><path d="M16.700 1.200q4.300 6.800 0 13.600" stroke="#999" /></svg>
    <svg width="30" height="17" viewBox="0 0 30 17" fill="none" stroke="#111"><rect x=".6" y=".6" width="28.800" height="15.800" strokeWidth="1.200" /><path d="M4 4.500h22M4 8.500h22" strokeDasharray="1.600 1.600" /><path d="M4 12.500h3M9 12.500h12M23 12.500h3" /></svg>
  </TrayIcons>
);

export default function App() {
  return (
    <Screen>
      <GlobalStyle />
      <BrowserChrome />
      <Viewport>
        <Main>
          <PageTitle><Brain />Redux - Redux Toolkit</PageTitle>
          <Grid>
            <Card>
              <SectionTitle n={1}>Counter</SectionTitle>
              <Count>3</Count>
              <ButtonRow>
                <Button $tone="#00c950" $width={92} $round><PlusMark />Tăng</Button>
                <Button $tone="#fb2c36" $width={95} $round><MinusMark />Giảm</Button>
              </ButtonRow>
            </Card>
            <Card>
              <SectionTitle n={2}>To-do List</SectionTitle>
              <TodoForm>
                <TextInput placeholder="Nhập công việc" />
                <Button $tone="#2b7fff" $width={72} $height={42}>Thêm</Button>
              </TodoForm>
              <TodoItem>Ôn thi reactJS<span>X</span></TodoItem>
            </Card>
            <Card>
              <SectionTitle n={3}>Toggle Theme</SectionTitle>
              <Button $tone="#615fff" $width={277}>Chế độ hiện tại: light (nhấn để đổi)</Button>
            </Card>
            <Card>
              <SectionTitle n={4}>Shopping Cart</SectionTitle>
              <CartPanel>
                <PanelTitle $size={23} $line={32} $gap={9}><CartIcon />Giỏ hàng</PanelTitle>
                <Button $tone="#2b7fff" $width={180}>Thêm sản phẩm mẫu</Button>
                <CartItem>
                  <ItemName>Áo thun trắng</ItemName>
                  <ItemPrice>200,000đ</ItemPrice>
                  <QuantityRow>
                    <QuantityLabel>Số lượng:</QuantityLabel>
                    <QuantityInput defaultValue="2" />
                    <RemoveLink>Xoá</RemoveLink>
                  </QuantityRow>
                </CartItem>
                <Totals>
                  <TotalLine><Abacus />Tổng số lượng: 2</TotalLine>
                  <TotalLine><MoneyBag />Tổng tiền: 400,000đ</TotalLine>
                </Totals>
              </CartPanel>
            </Card>
            <Card $wide>
              <SectionTitle n={5}>Authentication</SectionTitle>
              <LoginPanel>
                <PanelTitle $size={19} $line={28} $gap={9}><LockKey />Đăng nhập</PanelTitle>
                <LoginInput />
              </LoginPanel>
            </Card>
          </Grid>
        </Main>
        <ScrollTrack><Arrow /><ScrollThumb /><Arrow down /></ScrollTrack>
      </Viewport>
      <Taskbar>
        <StartSlot><WindowsLogo /></StartSlot>
        <SearchBox><SearchGlass /><SearchText>Type here to search</SearchText><Sparkles /></SearchBox>
        <TaskViewSlot><TaskView /></TaskViewSlot>
        <AppRow>
          {Apps.map((a, i) => (
            <AppSlot key={i} $open={a.open} $current={a.current}>{a.icon}</AppSlot>
          ))}
        </AppRow>
        <Tray>
          <TrayGlyphs />
          <Clock><span>7:02 AM</span><span>4/17/2025</span></Clock>
          <Notice>
            <svg width="21" height="20" viewBox="0 0 21 20"><path d="M0 0h20.500v16H12l-3 3.500V16H0z" /><path d="M4 4.500h12.500M4 8.200h12.500M4 12h8" stroke="#ebdddc" /></svg>
            <NoticeBadge>1</NoticeBadge>
          </Notice>
          <ShowDesktop />
        </Tray>
      </Taskbar>
    </Screen>
  );
}
